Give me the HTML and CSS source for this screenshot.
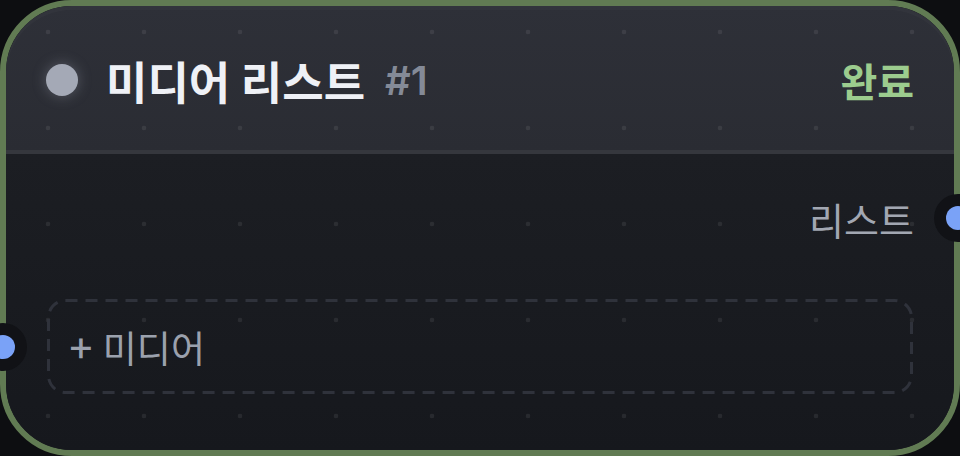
FILE: index.html
```html
<!DOCTYPE html>
<html lang="ko">
<head>
<meta charset="utf-8">
<title>미디어 리스트</title>
<link rel="stylesheet" href="styles.css">
</head>
<body>
<div class="node">
  <div class="node-header">
    <div class="header-content">
      <span class="status-dot"></span>
      <span class="title">미디어 리스트</span>
      <span class="node-id">#1</span>
      <span class="status">완료</span>
    </div>
  </div>
  <div class="node-body">
    <div class="output-row">
      <span class="port-label">리스트</span>
      <span class="socket socket-out"><span class="socket-core"></span></span>
    </div>
    <div class="input-row">
      <span class="socket socket-in"><span class="socket-core"></span></span>
      <div class="add-box">
        <svg class="dash-frame" width="866" height="95" viewBox="0 0 866 95" aria-hidden="true">
          <rect x="1.5" y="1.5" width="863" height="92" rx="17" ry="17" fill="none" stroke="#2f323b" stroke-width="3" stroke-dasharray="12 8"/>
        </svg>
        <span class="add-plus">+</span>
        <span class="add-label">미디어</span>
      </div>
    </div>
  </div>
</div>
</body>
</html>
```
FILE: styles.css
```css
html, body {
  margin: 0;
  padding: 0;
  width: 960px;
  height: 456px;
  overflow: hidden;
  background: #0d0e11;
  font-family: Inter, "Noto Sans CJK KR", "Noto Sans", sans-serif;
}

.node {
  position: relative;
  box-sizing: border-box;
  width: 960px;
  height: 456px;
  border: 6px solid #617b53;
  border-radius: 72px;
  background: #17191e;
  display: flex;
  flex-direction: column;
}

.node::after {
  content: "";
  position: absolute;
  inset: 0;
  z-index: 1;
  pointer-events: none;
  border-radius: 66px;
  background-image: radial-gradient(circle at 48px 48px, rgba(255,255,255,0.075) 0, rgba(255,255,255,0.075) 2px, transparent 2.6px);
  background-size: 96px 96px;
  background-position: -6px -22px;
}

.node-header {
  height: 144px;
  border-bottom: 4px solid #35373d;
  border-radius: 66px 66px 0 0;
  background: linear-gradient(180deg, #2e3038 0%, #2a2c33 100%);
  box-shadow: inset 0 4px 0 rgba(255,255,255,0.025);
  display: flex;
  align-items: center;
  padding: 0 40px;
}

.header-content {
  position: relative;
  z-index: 2;
  flex: 1;
  display: flex;
  align-items: center;
  padding-top: 4px;
}

.status-dot {
  width: 32px;
  height: 32px;
  border-radius: 50%;
  background: #a4a9b6;
  box-shadow: 0 0 14px rgba(170,176,190,0.35);
  margin-right: 28px;
  flex: none;
}

.title {
  font-size: 45px;
  font-weight: 700;
  color: #eff1f6;
}

.node-id {
  margin-left: 20px;
  font-size: 40px;
  font-weight: 600;
  color: #848a97;
}

.status {
  margin-left: auto;
  font-size: 40px;
  font-weight: 600;
  color: #9ccc8e;
}

.node-body {
  flex: 1;
  border-radius: 0 0 66px 66px;
  background: linear-gradient(180deg, #1c1e23 0%, #16181d 100%);
  padding: 40px 40px 0;
  display: flex;
  flex-direction: column;
}

.output-row {
  position: relative;
  z-index: 2;
  height: 48px;
  display: flex;
  align-items: center;
  justify-content: flex-end;
}

.port-label {
  font-size: 38px;
  color: #a2a7b2;
}

.socket {
  position: absolute;
  top: 50%;
  width: 48px;
  height: 48px;
  margin-top: -24px;
  border-radius: 50%;
  background: #111216;
  display: flex;
  align-items: center;
  justify-content: center;
}

.socket-core {
  width: 24px;
  height: 24px;
  border-radius: 50%;
  background: #7aa2f7;
}

.socket-out {
  right: -68px;
}

.socket-in {
  left: -67px;
}

.input-row {
  position: relative;
  z-index: 2;
  margin-top: 57px;
}

.add-box {
  position: relative;
  box-sizing: border-box;
  width: 866px;
  height: 95px;
  margin-left: 1px;
  border-radius: 18px;
  display: flex;
  align-items: center;
  padding-left: 20px;
  color: #9ba1ad;
}

.dash-frame {
  position: absolute;
  left: 0;
  top: 0;
  pointer-events: none;
}

.add-plus {
  font-size: 42px;
  font-weight: 400;
  margin-right: 8px;
  line-height: 1;
  position: relative;
  top: -2px;
}

.add-label {
  font-size: 37px;
}
```
